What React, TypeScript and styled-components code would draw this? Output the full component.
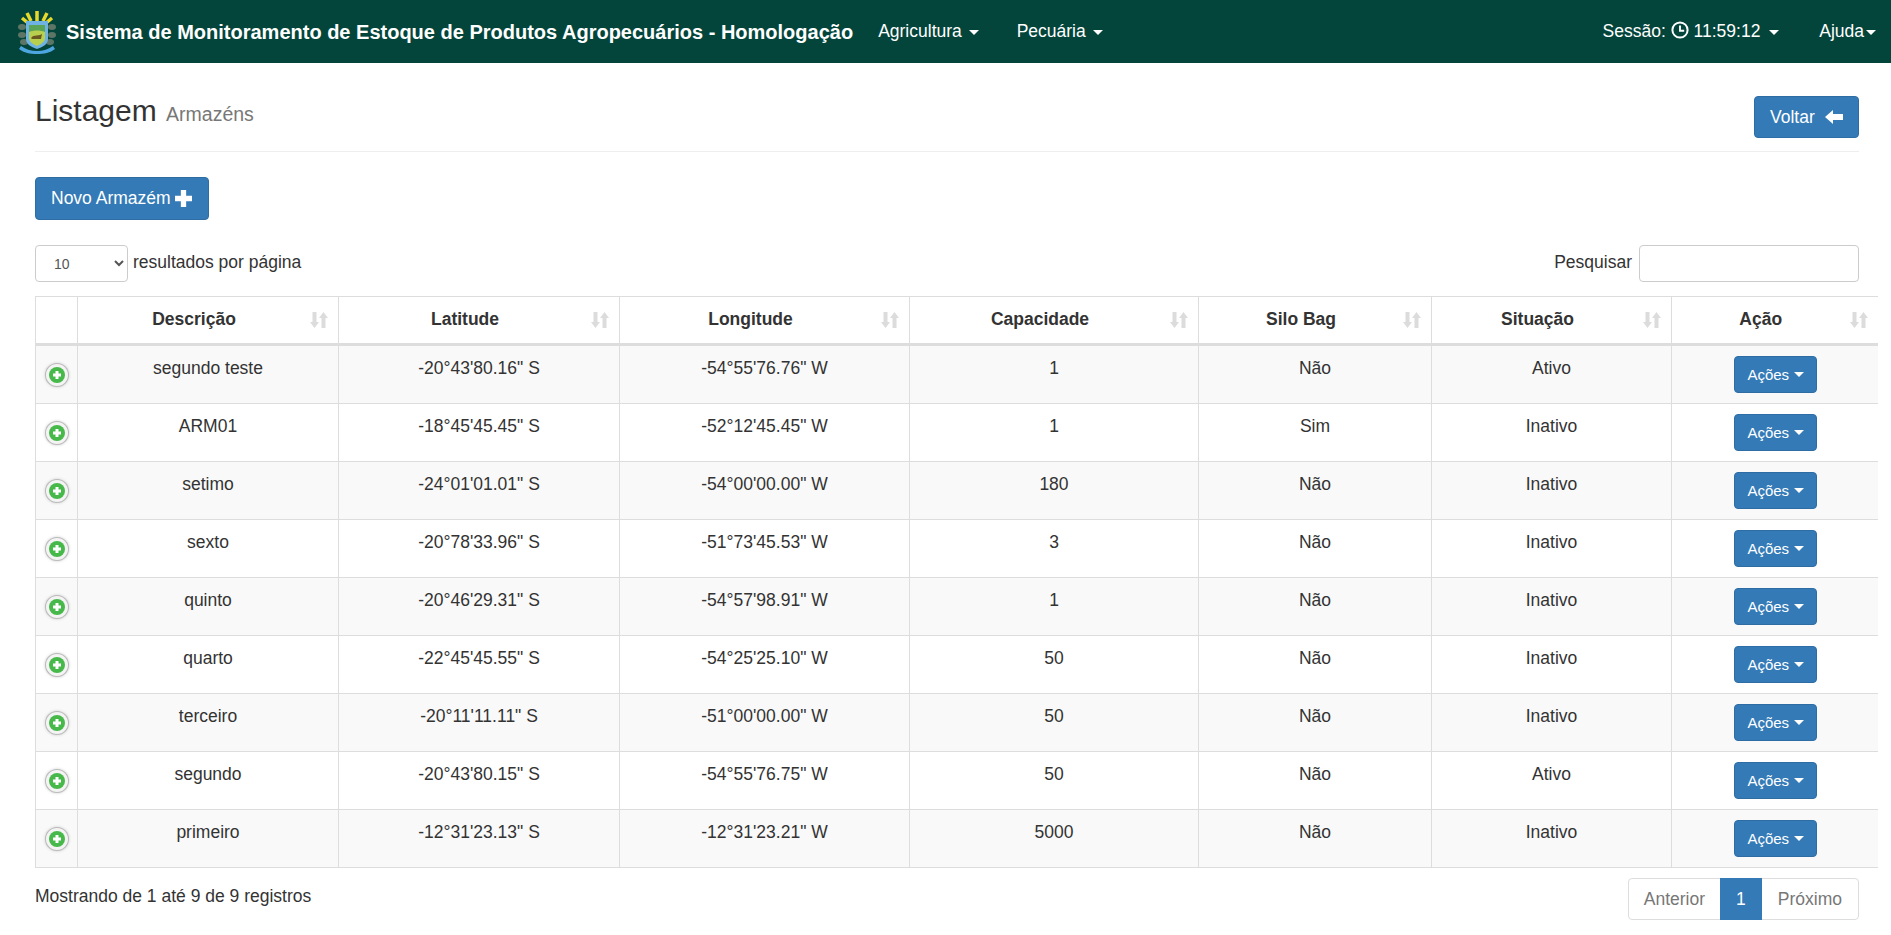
import React from 'react'
import styled, { createGlobalStyle } from 'styled-components'

const rows = [
  ['segundo teste', '-20°43\'80.16" S', '-54°55\'76.76" W', '1', 'Não', 'Ativo'],
  ['ARM01', '-18°45\'45.45" S', '-52°12\'45.45" W', '1', 'Sim', 'Inativo'],
  ['setimo', '-24°01\'01.01" S', '-54°00\'00.00" W', '180', 'Não', 'Inativo'],
  ['sexto', '-20°78\'33.96" S', '-51°73\'45.53" W', '3', 'Não', 'Inativo'],
  ['quinto', '-20°46\'29.31" S', '-54°57\'98.91" W', '1', 'Não', 'Inativo'],
  ['quarto', '-22°45\'45.55" S', '-54°25\'25.10" W', '50', 'Não', 'Inativo'],
  ['terceiro', '-20°11\'11.11" S', '-51°00\'00.00" W', '50', 'Não', 'Inativo'],
  ['segundo', '-20°43\'80.15" S', '-54°55\'76.75" W', '50', 'Não', 'Ativo'],
  ['primeiro', '-12°31\'23.13" S', '-12°31\'23.21" W', '5000', 'Não', 'Inativo'],
]

const columns = [
  { title: 'Descrição', width: 261 },
  { title: 'Latitude', width: 281 },
  { title: 'Longitude', width: 290 },
  { title: 'Capacidade', width: 289 },
  { title: 'Silo Bag', width: 233 },
  { title: 'Situação', width: 240 },
  { title: 'Ação', width: 206 },
]

const Logo = () => (
  <svg width="40" height="46" viewBox="0 0 40 46">
    <g stroke="#e6d92c" strokeWidth="3.500">
      <path d="M20 12V2M14 12L10 4M26 12l4-8M11 14L5 9M29 14l6-5" />
    </g>
    <g fill="#5d7565">
      <ellipse cx="5" cy="18" rx="4" ry="3" />
      <ellipse cx="35" cy="18" rx="4" ry="3" />
      <ellipse cx="5" cy="26" rx="4" ry="3" />
      <ellipse cx="35" cy="26" rx="4" ry="3" />
      <ellipse cx="7" cy="33" rx="4" ry="3" />
      <ellipse cx="33" cy="33" rx="4" ry="3" />
    </g>
    <path d="M9 12h22v18c0 6-6 8-11 10-5-2-11-4-11-10z" fill="#6fb2e4" />
    <path d="M12 16h16v13c0 4-4 6-8 8-4-2-8-4-8-8z" fill="#b9cf4e" />
    <path d="M12 16h16v7c-5-2-11-2-16 0z" fill="#5aa45a" />
    <path d="M15 30h9l1-5-2 1-7 1-2 2z" fill="#6b5a20" />
    <path d="M2 40c5 4 11 5 18 5s13-1 18-5l-2-3c-4 3-10 5-16 5S8 40 4 37z" fill="#4ea6e0" />
  </svg>
)

const Caret = () => <CaretMark />

const SortIcon = () => (
  <SortMark width="18" height="18" viewBox="0 0 18 18">
    <path d="M2.500 1h4v10h2.500L4.500 17 0 11h2.500zM11.500 17h4V7H18l-4.500-6L9 7h2.500z" fill="#dcdcdc" />
  </SortMark>
)

const App: React.FunctionComponent = () => {
  return (
    <>
      <GlobalStyle />
      <Navbar>
        <Brand>
          <Logo />
          <BrandTitle>Sistema de Monitoramento de Estoque de Produtos Agropecuários - Homologação</BrandTitle>
        </Brand>
        <NavItem $left={25}>Agricultura <Caret /></NavItem>
        <NavItem $left={38}>Pecuária <Caret /></NavItem>
        <NavRight>
          <NavItem $left={0}>
            Sessão:{' '}
            <svg width="18" height="18" viewBox="0 0 18 18" style={{ verticalAlign: -2 }}>
              <circle cx="9" cy="9" r="7.600" fill="none" stroke="#fff" strokeWidth="2" />
              <path d="M9 4.500v5.200h4.200" fill="none" stroke="#fff" strokeWidth="1.900" />
            </svg>{' '}
            11:59:12 <SessionCaret />
          </NavItem>
          <NavItem $left={40}>Ajuda<Caret /></NavItem>
        </NavRight>
      </Navbar>
      <Page>
        <PageHeader>
          <Title>Listagem <small>Armazéns</small></Title>
          <BigButton>
            Voltar
            <svg width="18" height="16" viewBox="0 0 18 16">
              <path d="M0 8l8-7v4h10v6H8v4z" fill="#fff" />
            </svg>
          </BigButton>
        </PageHeader>
        <NewButton>
          Novo Armazém
          <svg width="17" height="17" viewBox="0 0 16 16">
            <path d="M5.500 0h5v5.500H16v5h-5.500V16h-5v-5.500H0v-5h5.500z" fill="#fff" />
          </svg>
        </NewButton>
        <Controls>
          <Label>
            <PageSize defaultValue="10">
              <option>10</option>
              <option>25</option>
              <option>50</option>
            </PageSize>
            <LabelText>resultados por página</LabelText>
          </Label>
          <Label>
            <LabelText>Pesquisar</LabelText>
            <Search />
          </Label>
        </Controls>
        <TableClip>
          <Table>
            <colgroup>
              <col style={{ width: 42 }} />
              {columns.map((c) => (
                <col key={c.title} style={{ width: c.width }} />
              ))}
            </colgroup>
            <thead>
              <tr>
                <Th />
                {columns.map((c) => (
                  <Th key={c.title}>
                    {c.title}
                    <SortIcon />
                  </Th>
                ))}
              </tr>
            </thead>
            <tbody>
              {rows.map((r) => (
                <Row key={r[0]}>
                  <ToggleCell>
                    <Toggle>
                      <svg width="10" height="10" viewBox="0 0 10 10">
                        <path d="M3.500 1h3v2.500H9v3H6.500V9h-3V6.500H1v-3h2.500z" fill="#fff" />
                      </svg>
                    </Toggle>
                  </ToggleCell>
                  {r.map((v, i) => (
                    <Td key={i}>{v}</Td>
                  ))}
                  <ActionCell>
                    <ActionButton>Ações <Caret /></ActionButton>
                  </ActionCell>
                </Row>
              ))}
            </tbody>
          </Table>
        </TableClip>
        <Footer>
          <Info>Mostrando de 1 até 9 de 9 registros</Info>
          <Pager>
            <PageLink>Anterior</PageLink>
            <PageLink $active>1</PageLink>
            <PageLink>Próximo</PageLink>
          </Pager>
        </Footer>
      </Page>
    </>
  )
}

const GlobalStyle = createGlobalStyle`
  html, body {
    margin:0;
    background:#fff;
    color:#333;
    font-family:"Liberation Sans", Arial, sans-serif;
    font-size:17.5px;
    line-height:1.3;
  }
  * { box-sizing:border-box; }
`

const Navbar = styled.nav`
  display:flex;
  align-items:center;
  height:63px;
  padding:0 15px 0 17px;
  background:#03453b;
  color:#fff;
`

const Brand = styled.div`
  display:flex;
  align-items:center;
  gap:9px;
`

const BrandTitle = styled.span`
  font-size:20px;
  font-weight:bold;
`

const NavItem = styled.span<{ $left: number }>`
  margin-left:${(p) => p.$left}px;
  font-size:17.5px;
  white-space:nowrap;
`

const NavRight = styled.div`
  display:flex;
  margin-left:auto;
`

const CaretMark = styled.span`
  display:inline-block;
  width:0;
  height:0;
  margin-left:2px;
  vertical-align:middle;
  border-top:5px solid currentColor;
  border-left:5px solid transparent;
  border-right:5px solid transparent;
`

const SessionCaret = styled(CaretMark)`
  margin-left:4px;
`

const Page = styled.main`
  padding:0 32px 0 35px;
`

const PageHeader = styled.header`
  display:flex;
  justify-content:space-between;
  align-items:flex-start;
  height:89px;
  padding-top:33px;
  border-bottom:1px solid #eee;
`

const Title = styled.h1`
  margin:-2px 0 0;
  font-size:30px;
  font-weight:normal;
  line-height:1.1;

  small {
    font-size:65%;
    color:#777;
    margin-left:1px;
  }
`

const Button = styled.button`
  display:inline-flex;
  align-items:center;
  background:#337ab7;
  border:1px solid #2e6da4;
  border-radius:4px;
  color:#fff;
  font-family:inherit;
  font-size:17.5px;
`

const BigButton = styled(Button)`
  gap:10px;
  width:105px;
  height:42px;
  padding:0 15px;
`

const NewButton = styled(Button)`
  gap:4px;
  width:174px;
  height:43px;
  margin-top:25px;
  padding:0 15px;
`

const Controls = styled.div`
  display:flex;
  justify-content:space-between;
  align-items:center;
  height:37px;
  margin-top:25px;
`

const Label = styled.label`
  display:flex;
  align-items:center;
  gap:5px;
`

const LabelText = styled.span`
  margin-top:-2px;
`

const PageSize = styled.select`
  width:93px;
  height:37px;
  padding:0 14px;
  background:#fff;
  border:1px solid #ccc;
  border-radius:4px;
  color:#555;
  font-family:inherit;
  font-size:14px;
`

const Search = styled.input`
  width:220px;
  height:37px;
  margin-left:2px;
  border:1px solid #ccc;
  border-radius:4px;
  outline:none;
`

const TableClip = styled.div`
  width:1842px;
  margin-top:14px;
`

const Table = styled.table`
  width:1842px;
  table-layout:fixed;
  border-collapse:collapse;
  border-top:1px solid #ddd;
  border-left:1px solid #ddd;
`

const Th = styled.th`
  position:relative;
  height:48px;
  padding:7px 36px 9px 8px;
  border-right:1px solid #ddd;
  border-bottom:3px solid #ddd;
  font-weight:bold;
  text-align:center;

  &:last-child {
    border-right:none;
  }
`

const SortMark = styled.svg`
  position:absolute;
  top:14px;
  right:10px;
`

const Row = styled.tr`
  height:58px;
  &:nth-child(odd) {
    background:#f9f9f9;
  }
`

const Td = styled.td`
  padding:11px 8px 9px;
  border-right:1px solid #ddd;
  border-bottom:1px solid #ddd;
  text-align:center;
  vertical-align:top;
`

const ToggleCell = styled(Td)`
  padding:0;
  vertical-align:middle;
`

const Toggle = styled.span`
  display:flex;
  align-items:center;
  justify-content:center;
  width:16px;
  height:16px;
  margin:0 auto;
  border-radius:50%;
  background:#47b84a;
  box-shadow:0 0 0 3px #f4f4f4, 0 0 0 4px #bbb, 0 0 3px 4px #ccc;
`

const ActionCell = styled(Td)`
  border-right:none;
  padding:10px 6px 10px 8px;
`

const ActionButton = styled(Button)`
  justify-content:center;
  width:83px;
  height:37px;
  padding:0;
  font-size:15px;
  gap:3px;
`

const Footer = styled.div`
  display:flex;
  justify-content:space-between;
  align-items:flex-start;
  margin-top:10px;
`

const Info = styled.div`
  padding-top:7px;
`

const Pager = styled.div`
  display:flex;
  height:42px;
  border:1px solid #ddd;
  border-radius:4px;
`

const PageLink = styled.span<{ $active?: boolean }>`
  display:flex;
  align-items:center;
  padding:0 16px;
  margin:${(p) => (p.$active ? '-1px 0' : '0')};
  background:${(p) => (p.$active ? '#337ab7' : 'transparent')};
  color:${(p) => (p.$active ? '#fff' : '#777')};

  &:first-child {
    padding:0 15px;
  }
`

export default App
